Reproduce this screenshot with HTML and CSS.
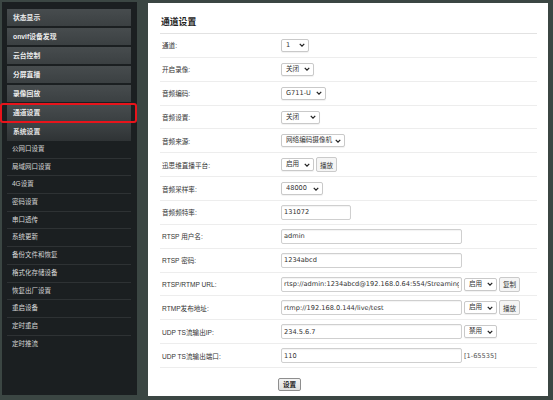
FILE: index.html
```html
<!DOCTYPE html>
<html lang="zh-CN">
<head>
<meta charset="utf-8">
<title>通道设置</title>
<link rel="stylesheet" href="styles.css">
</head>
<body>
<div class="page">
  <nav class="sidebar">
    <a class="nav-btn">状态显示</a>
    <a class="nav-btn">onvif设备发现</a>
    <a class="nav-btn">云台控制</a>
    <a class="nav-btn">分屏直播</a>
    <a class="nav-btn">录像回放</a>
    <a class="nav-btn">通道设置</a>
    <div class="nav-head">系统设置</div>
    <ul class="nav-list">
      <li>公网口设置</li>
      <li>局域网口设置</li>
      <li>4G设置</li>
      <li>密码设置</li>
      <li>串口透传</li>
      <li>系统更新</li>
      <li>备份文件和恢复</li>
      <li>格式化存储设备</li>
      <li>恢复出厂设置</li>
      <li>重启设备</li>
      <li>定时重启</li>
      <li>定时推流</li>
    </ul>
    <div class="highlight"></div>
  </nav>

  <main class="panel">
    <h1 class="title">通道设置</h1>
    <div class="form">
      <div class="row">
        <label class="lbl">通道:</label>
        <span class="sel w-ch"><select><option>1</option></select><svg class="chev" viewBox="0 0 8 5"><path d="M1 1l3 3 3-3"/></svg></span>
      </div>
      <div class="row">
        <label class="lbl">开启录像:</label>
        <span class="sel w-off"><select><option>关闭</option></select><svg class="chev" viewBox="0 0 8 5"><path d="M1 1l3 3 3-3"/></svg></span>
      </div>
      <div class="row">
        <label class="lbl">音频编码:</label>
        <span class="sel w-codec"><select><option>G711-U</option></select><svg class="chev" viewBox="0 0 8 5"><path d="M1 1l3 3 3-3"/></svg></span>
      </div>
      <div class="row">
        <label class="lbl">音频设置:</label>
        <span class="sel w-aud"><select><option>关闭</option></select><svg class="chev" viewBox="0 0 8 5"><path d="M1 1l3 3 3-3"/></svg></span>
      </div>
      <div class="row">
        <label class="lbl">音频来源:</label>
        <span class="sel w-src"><select><option>网络编码摄像机</option></select><svg class="chev" viewBox="0 0 8 5"><path d="M1 1l3 3 3-3"/></svg></span>
      </div>
      <div class="row">
        <label class="lbl">迅思维直播平台:</label>
        <span class="sel w-on"><select><option>启用</option></select><svg class="chev" viewBox="0 0 8 5"><path d="M1 1l3 3 3-3"/></svg></span>
        <button class="btn">播放</button>
      </div>
      <div class="row">
        <label class="lbl">音频采样率:</label>
        <span class="sel w-rate"><select><option>48000</option></select><svg class="chev" viewBox="0 0 8 5"><path d="M1 1l3 3 3-3"/></svg></span>
      </div>
      <div class="row">
        <label class="lbl">音频频特率:</label>
        <input class="inp short" value="131072">
      </div>
      <div class="row">
        <label class="lbl">RTSP 用户名:</label>
        <input class="inp" value="admin">
      </div>
      <div class="row">
        <label class="lbl">RTSP 密码:</label>
        <input class="inp" value="1234abcd">
      </div>
      <div class="row">
        <label class="lbl">RTSP/RTMP URL:</label>
        <input class="inp" value="rtsp://admin:1234abcd@192.168.0.64:554/Streaming/Channels/101">
        <span class="sel w-on"><select><option>启用</option></select><svg class="chev" viewBox="0 0 8 5"><path d="M1 1l3 3 3-3"/></svg></span>
        <button class="btn">复制</button>
      </div>
      <div class="row">
        <label class="lbl">RTMP发布地址:</label>
        <input class="inp" value="rtmp://192.168.0.144/live/test">
        <span class="sel w-on"><select><option>启用</option></select><svg class="chev" viewBox="0 0 8 5"><path d="M1 1l3 3 3-3"/></svg></span>
        <button class="btn">播放</button>
      </div>
      <div class="row">
        <label class="lbl">UDP TS流输出IP:</label>
        <input class="inp" value="234.5.6.7">
        <span class="sel w-on"><select><option>禁用</option></select><svg class="chev" viewBox="0 0 8 5"><path d="M1 1l3 3 3-3"/></svg></span>
      </div>
      <div class="row">
        <label class="lbl">UDP TS流输出端口:</label>
        <input class="inp" value="110">
        <span class="hint">[1-65535]</span>
      </div>
    </div>
    <div class="actions">
      <button class="btn-submit">设置</button>
    </div>
  </main>
</div>
</body>
</html>
```

FILE: styles.css
```css
html, body {
  margin: 0;
  padding: 0;
}

body {
  width: 553px;
  height: 400px;
  overflow: hidden;
  background: #3b4643;
  font-family: "Liberation Sans", "Noto Sans CJK SC", sans-serif;
}

.page {
  display: flex;
  align-items: flex-start;
  padding: 2px 0 0 2px;
}

/* ---------- sidebar ---------- */
.sidebar {
  position: relative;
  width: 135px;
  height: 393px;
  box-sizing: border-box;
  padding: 7px 6px 0 5px;
  background: #1b1f21;
}

.nav-btn {
  display: block;
  height: 17px;
  margin-bottom: 2px;
  padding-left: 6px;
  line-height: 17px;
  font-size: 6.8px;
  font-weight: bold;
  color: #ececec;
  background: linear-gradient(#474c4e, #3b4042);
}

.nav-head {
  height: 18px;
  line-height: 18px;
  padding-left: 6px;
  font-size: 6.8px;
  font-weight: bold;
  color: #e2e2e2;
  background: linear-gradient(#3e4345, #2f3335);
}

.nav-list {
  list-style: none;
  margin: 0;
  padding: 0;
}

.nav-list li {
  height: 16.7px;
  line-height: 16.7px;
  padding-left: 5px;
  font-size: 6.5px;
  color: #d6d6d6;
  border-bottom: 1px solid #2e3234;
}

.nav-list li:last-child {
  border-bottom: 0;
}

.highlight {
  position: absolute;
  left: -2px;
  top: 101px;
  width: 137px;
  height: 20px;
  box-sizing: border-box;
  border: 2px solid #e8141b;
  border-radius: 3px;
}

/* ---------- panel ---------- */
.panel {
  width: 400px;
  height: 393px;
  margin: 1px 0 0 11px;
  box-sizing: border-box;
  padding: 0 11px 0 12px;
  background: #fff;
}

.title {
  margin: 0;
  height: 30px;
  box-sizing: border-box;
  padding: 13px 0 0 1px;
  font-size: 8.8px;
  line-height: 12px;
  font-weight: bold;
  color: #222;
}

.form {
  border-top: 1px solid #e2e2e2;
}

.row {
  display: flex;
  align-items: center;
  height: 23.86px;
  box-sizing: border-box;
  border-bottom: 1px solid #ededed;
}

.lbl {
  width: 119px;
  padding-left: 2px;
  flex: none;
  font-size: 6.6px;
  color: #333;
}

.sel {
  position: relative;
  display: block;
  flex: none;
  height: 13px;
  margin-right: 2px;
}

.sel select {
  -webkit-appearance: none;
  appearance: none;
  display: block;
  width: 100%;
  height: 13px;
  margin: 0;
  box-sizing: border-box;
  padding: 0 0 0 4px;
  border: 1px solid #c9c9c9;
  border-radius: 2px;
  background: #fff;
  box-shadow: 0 1px 1px rgba(0, 0, 0, 0.06);
  font-family: "DejaVu Sans", "Noto Sans CJK SC", sans-serif;
  font-size: 6.6px;
  line-height: 11px;
  color: #333;
}

.chev {
  position: absolute;
  right: 4px;
  top: 4.5px;
  width: 6px;
  height: 4px;
  pointer-events: none;
}

.chev path {
  fill: none;
  stroke: #222;
  stroke-width: 1.7;
}

.w-ch { width: 28px; }
.w-off { width: 33px; }
.w-codec { width: 45px; }
.w-aud { width: 39px; }
.w-src { width: 64px; }
.w-on { width: 33px; }
.w-rate { width: 42px; }

.inp {
  display: block;
  flex: none;
  width: 181px;
  height: 15px;
  margin: 0 2px 0 0;
  box-sizing: border-box;
  padding: 0 2px;
  border: 1px solid #cfcfcf;
  border-radius: 2px;
  box-shadow: inset 0 1px 1px rgba(0, 0, 0, 0.05);
  font-family: "DejaVu Sans", "Noto Sans CJK SC", sans-serif;
  font-size: 6.6px;
  color: #333;
  background: #fff;
}

.inp.short {
  width: 70px;
}

.btn {
  display: block;
  flex: none;
  height: 15px;
  margin: 0;
  padding: 0 3px;
  box-sizing: border-box;
  border: 1px solid #cacaca;
  border-radius: 2px;
  background: #f5f5f5;
  font-family: "Noto Sans CJK SC", sans-serif;
  font-size: 6.6px;
  color: #333;
}

.hint {
  font-family: "DejaVu Sans", sans-serif;
  font-size: 6.6px;
  color: #555;
}

.actions {
  padding: 5px 0 0 118px;
}

.btn-submit {
  width: 23px;
  height: 13px;
  margin: 0;
  padding: 0;
  box-sizing: border-box;
  border: 1px solid #8e8e8e;
  border-radius: 2px;
  background: linear-gradient(#f3f3f3, #dedede);
  font-family: "Noto Sans CJK SC", sans-serif;
  font-size: 6.6px;
  font-weight: bold;
  color: #222;
}
```
